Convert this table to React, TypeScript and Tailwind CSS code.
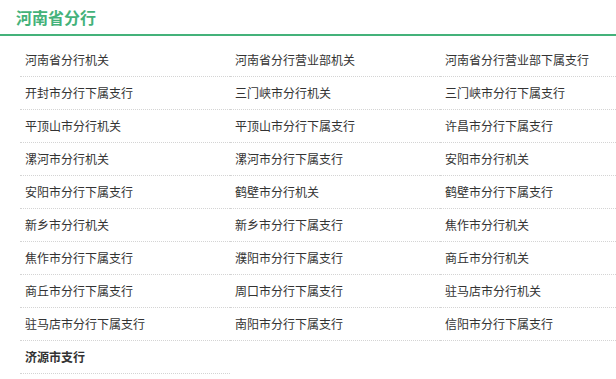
import React from 'react';

const branches: string[] = [
  '河南省分行机关', '河南省分行营业部机关', '河南省分行营业部下属支行',
  '开封市分行下属支行', '三门峡市分行机关', '三门峡市分行下属支行',
  '平顶山市分行机关', '平顶山市分行下属支行', '许昌市分行下属支行',
  '漯河市分行机关', '漯河市分行下属支行', '安阳市分行机关',
  '安阳市分行下属支行', '鹤壁市分行机关', '鹤壁市分行下属支行',
  '新乡市分行机关', '新乡市分行下属支行', '焦作市分行机关',
  '焦作市分行下属支行', '濮阳市分行下属支行', '商丘市分行机关',
  '商丘市分行下属支行', '周口市分行下属支行', '驻马店市分行机关',
  '驻马店市分行下属支行', '南阳市分行下属支行', '信阳市分行下属支行',
];

const App: React.FC = () => {
  return (
    <div
      className="w-[616px] h-[379px] overflow-hidden bg-white text-[#333]"
      style={{ fontFamily: '"Microsoft YaHei", "Noto Sans CJK SC", "Noto Sans", sans-serif' }}
    >
      {/* Header */}
      <div className="h-[36px] border-b-2 border-[#44b27a] pl-4 flex items-center">
        <h2 className="text-[16px] font-bold text-[#44b27a] leading-none">河南省分行</h2>
      </div>

      {/* Branch list */}
      <ul className="mt-2 ml-5 grid grid-cols-[210px_210px_210px]">
        {branches.map((name, i) => (
          <li
            key={i}
            className="h-[33px] pl-[5px] flex items-center text-[12px] border-b border-dotted border-[#d4d4d4] whitespace-nowrap"
          >
            {name}
          </li>
        ))}
        <li className="h-[33px] pl-[5px] flex items-center text-[12px] font-bold border-b border-dotted border-[#d4d4d4]">
          济源市支行
        </li>
      </ul>
    </div>
  );
};

export default App;
